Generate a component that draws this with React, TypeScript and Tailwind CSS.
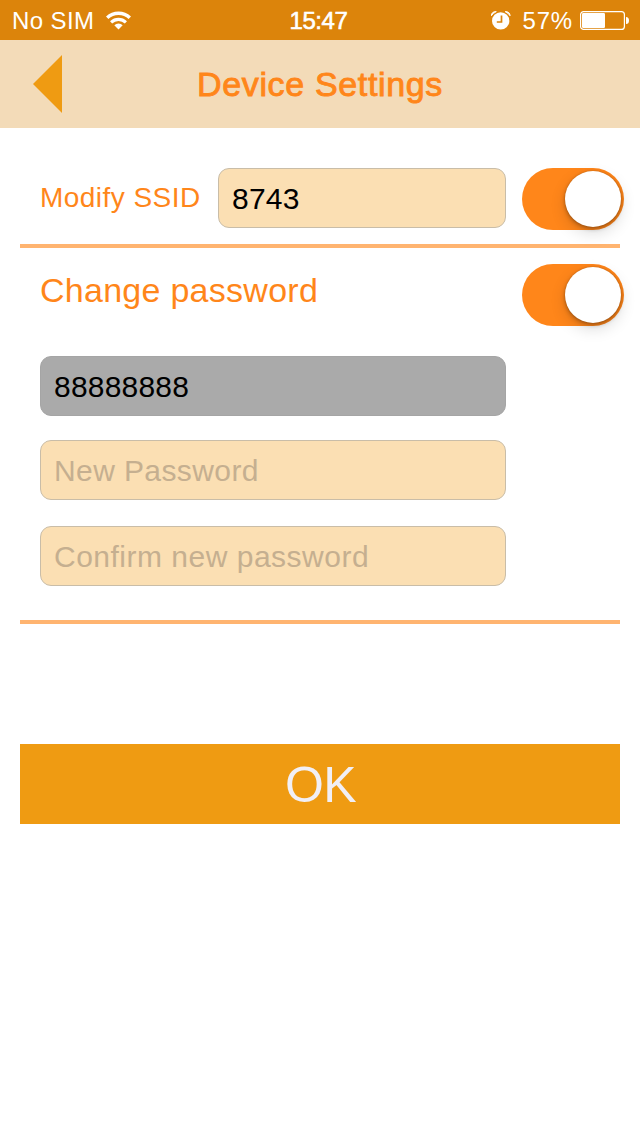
import React from 'react';
import clsx from 'clsx';

const WifiIcon: React.FC = () => (
  <svg width="25" height="19" viewBox="0 0 25 19" fill="none" stroke="#fff">
    <path d="M1.2 6.8a16.2 16.2 0 0 1 22.6 0" strokeWidth="3.4" />
    <path d="M5.1 11.3a10.8 10.8 0 0 1 14.8 0" strokeWidth="3.1" />
    <path d="M12.5 18.6l-4.2-4.3a6 6 0 0 1 8.4 0z" fill="#fff" stroke="none" />
  </svg>
);

const AlarmIcon: React.FC = () => (
  <svg width="20" height="19" viewBox="0 0 20 19" fill="none">
    <circle cx="9.7" cy="9.9" r="8.7" fill="#fff" />
    <path d="M0.3 4.8C0.2 2.2 2.4 0.3 5.3 0.6 3.2 1.6 1.5 3 0.3 4.8z" fill="#fff" stroke="#fff" strokeWidth="0.9" />
    <path d="M19.1 4.8C19.2 2.2 17 0.3 14.1 0.6c2.1 1 3.8 2.4 5 4.2z" fill="#fff" stroke="#fff" strokeWidth="0.9" />
    <path d="M10.5 4.4v6.6H5.8" stroke="#dc840b" strokeWidth="1.7" />
  </svg>
);

const BatteryIcon: React.FC = () => (
  <svg width="49" height="19" viewBox="0 0 49 19" fill="none">
    <rect x="0.6" y="0.6" width="43.8" height="17.8" rx="3" stroke="#fff" strokeWidth="1.2" />
    <rect x="2" y="2" width="23" height="15" rx="1.2" fill="#fff" />
    <path d="M46 6a3 3.5 0 0 1 0 7z" fill="#fff" />
  </svg>
);

const Toggle: React.FC<{ label: string }> = ({ label }) => (
  <button
    role="switch"
    aria-checked="true"
    aria-label={label}
    className="flex h-[62px] w-[102px] shrink-0 items-center justify-end rounded-full bg-[#ff861a] pr-[3px]"
  >
    <span className="size-14 rounded-full bg-white shadow-[0_6px_16px_rgba(0,0,0,0.14),0_2px_4px_rgba(0,0,0,0.28),0_0_2px_rgba(0,0,0,0.18)]" />
  </button>
);

const Field: React.FC<React.InputHTMLAttributes<HTMLInputElement>> = ({ className, ...props }) => (
  <input
    className={clsx(
      'block h-[60px] shrink-0 rounded-[11px] border pl-[13px] pt-0.5 text-[30px] text-black outline-none placeholder:text-[#c5af90]',
      className
    )}
    {...props}
  />
);

export default function App() {
  return (
    <div className="h-[1136px] w-[640px] overflow-hidden bg-white font-['Liberation_Sans',Arial,sans-serif]">
      <div className="grid h-10 grid-cols-3 items-center bg-[#dc840b] text-2xl/10 text-white">
        <div className="flex items-center gap-3 pl-3">
          <span className="pt-px tracking-[0.4px]">No SIM</span>
          <WifiIcon />
        </div>
        <div className="pr-[3px] pt-px text-center tracking-[-0.4px] [-webkit-text-stroke:0.6px_currentColor]">15:47</div>
        <div className="flex items-center justify-end pr-[11px]">
          <AlarmIcon />
          <span className="ml-3 mr-[7px] pt-px tracking-[0.8px]">57%</span>
          <BatteryIcon />
        </div>
      </div>

      <header className="grid h-[88px] grid-cols-[100px_1fr_100px] items-center bg-[#f3dbb8]">
        <button aria-label="Back" className="pl-[33px]">
          <svg width="29" height="58" viewBox="0 0 29 58" fill="#ef9b12">
            <path d="M29 0v58L0 29z" />
          </svg>
        </button>
        <h1 className="text-center text-[34px] tracking-[0.65px] text-[#ff861a] [-webkit-text-stroke:0.9px_currentColor]">
          Device Settings
        </h1>
      </header>

      <main className="px-5 pt-10">
        <section className="flex h-20 items-start border-b-4 border-[#ffb470] pl-5">
          <label
            htmlFor="ssid"
            className="w-[178px] shrink-0 text-[28px]/[59px] tracking-[0.45px] text-[#ff861a]"
          >
            Modify SSID
          </label>
          <Field id="ssid" defaultValue="8743" className="mr-4 w-72 border-[#c9bda8] bg-[#fbdfb3] tracking-[0.2px]" />
          <Toggle label="Modify SSID" />
        </section>

        <section className="h-[376px] border-b-4 border-[#ffb470] pl-5 pt-4">
          <div className="flex items-start">
            <h2 className="w-[482px] shrink-0 text-[34px]/[53px] tracking-[0.27px] text-[#ff861a]">Change password</h2>
            <Toggle label="Change password" />
          </div>
          <div className="mt-[30px] w-[466px]">
            <Field
              defaultValue="88888888"
              readOnly
              className="w-full border-[#a5a5a5] bg-[#aaaaaa] tracking-[0.2px]"
            />
            <Field placeholder="New Password" className="mt-6 w-full border-[#c9bda8] bg-[#fbdfb3] tracking-[0.4px]" />
            <Field
              placeholder="Confirm new password"
              className="mt-[26px] w-full border-[#c9bda8] bg-[#fbdfb3] tracking-[0.5px]"
            />
          </div>
        </section>

        <button className="mt-[120px] h-20 w-full bg-[#ef9b12] pl-px pt-0.5 text-[50px] tracking-[-0.5px] text-[#f1eff5]">
          OK
        </button>
      </main>
    </div>
  );
}
